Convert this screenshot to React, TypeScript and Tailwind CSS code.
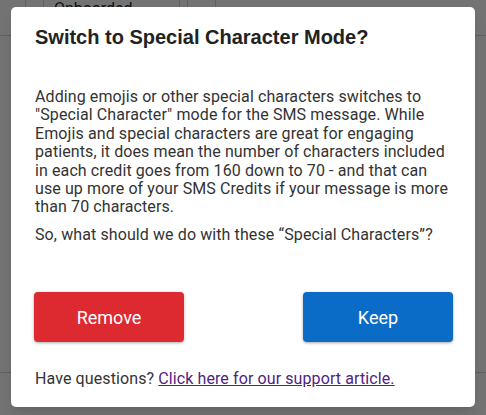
import React from 'react'

export default function App() {
  return (
    <div className="relative h-[415px] w-[486px] overflow-hidden bg-white font-['Roboto',sans-serif]">
      {/* page underneath the overlay */}
      <div className="flex h-[36px] items-center border-b border-gray-300 text-[16px] text-gray-800">
        <div className="h-full w-[26px] border-r border-gray-300" />
        <div className="flex h-full w-[18px] items-center justify-center border-r border-gray-300 text-[10px]">÷</div>
        <div className="flex h-full w-[135px] items-center justify-between px-[10px]">
          <span className="-mt-[18px]">Onboarded</span>
          <span className="text-[10px]">÷</span>
        </div>
        <div className="h-full w-[9px] border-x border-gray-300" />
        <div className="flex h-full w-[28px] items-center justify-center border-r border-gray-300 text-[10px]">⋯</div>
      </div>
      <div className="mt-[336px] border-t border-gray-300" />

      {/* overlay */}
      <div className="absolute inset-0 bg-[rgba(0,0,0,0.55)]">
        <div className="ml-[11px] mt-[7px] w-[464px] rounded-[5px] bg-white pb-[18px] pl-[23px] pr-[22px] pt-[18px] shadow-lg">
          <h2 className="pl-[1px] font-['Liberation_Sans',Arial,sans-serif] text-[20px] font-bold leading-[24px] text-[#222]">
            Switch to Special Character Mode?
          </h2>
          <div className="pl-[1px] tracking-[0.1px]">
            <p className="mt-[39px] text-[16px] leading-[18.4px] text-[#333]">
              Adding emojis or other special characters switches to "Special Character" mode for the SMS message. While
              Emojis and special characters are great for engaging patients, it does mean the number of characters
              included in each credit goes from 160 down to 70 - and that can use up more of your SMS Credits if your
              message is more than 70 characters.
            </p>
            <p className="mt-[9px] text-[16px] leading-[18.4px] text-[#333]">
              So, what should we do with these “Special Characters”?
            </p>
          </div>
          <div className="mt-[48px] flex justify-between">
            <button className="h-[50px] w-[150px] rounded-[4px] bg-[#dc2a30] text-[18px] text-white shadow-[0_1px_3px_rgba(0,0,0,0.35)]">
              Remove
            </button>
            <button className="h-[50px] w-[150px] rounded-[4px] bg-[#0b6cc8] text-[18px] text-white shadow-[0_1px_3px_rgba(0,0,0,0.35)]">
              Keep
            </button>
          </div>
          <p className="mt-[28px] pl-[1px] text-[16px] leading-[18.4px] tracking-[0.1px] text-[#333]">
            Have questions?{' '}
            <a href="#" className="text-[#4f2382] underline">
              Click here for our support article.
            </a>
          </p>
        </div>
      </div>
    </div>
  )
}
